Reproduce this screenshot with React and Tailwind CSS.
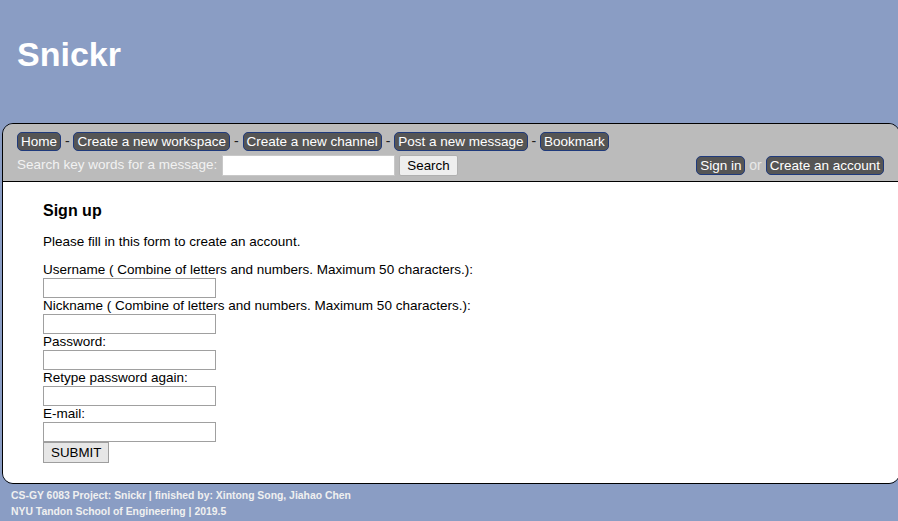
export default function App() {
  const navBtn =
    "inline-block h-[19px] px-[3px] rounded-[5px] border border-[#1f3a7c] bg-[#555555] text-white text-[13.5px] leading-[17px] whitespace-nowrap";
  const sep = <span className="text-[14px] text-[#222] whitespace-pre"> - </span>;
  const fields = [
    "Username ( Combine of letters and numbers. Maximum 50 characters.):",
    "Nickname ( Combine of letters and numbers. Maximum 50 characters.):",
    "Password:",
    "Retype password again:",
    "E-mail:",
  ];
  return (
    <div className="w-[898px] h-[521px] overflow-hidden bg-[#8a9dc4] font-['Liberation_Sans',Arial,sans-serif]">
      <header className="h-[123px] pt-[34px] px-[17px]">
        <h1 className="text-[34px] leading-[40px] font-bold text-white">Snickr</h1>
      </header>
      <div className="ml-[2px] w-[898px] border border-black rounded-t-[11px] rounded-b-[11px] overflow-hidden">
        <nav className="bg-[#bbbbbb] border-b border-black pt-[8px] pb-[5px] pl-[14px] pr-[15px] h-[58px]">
          <div className="flex items-center h-[19px]">
            <span className={navBtn}>Home</span>
            {sep}
            <span className={navBtn}>Create a new workspace</span>
            {sep}
            <span className={navBtn}>Create a new channel</span>
            {sep}
            <span className={navBtn}>Post a new message</span>
            {sep}
            <span className={navBtn}>Bookmark</span>
          </div>
          <div className="mt-[4px] h-[21px] flex items-center justify-between">
            <div className="flex items-center">
              <span className="text-[13.5px] text-[#f2f2f2] whitespace-nowrap">Search key words for a message:</span>
              <input className="ml-[5px] w-[173px] h-[21px] bg-white border border-[#c8c8c8] outline-none" />
              <button className="ml-[4px] h-[21px] px-[7px] bg-[#eeeeee] border border-[#b0b0b0] rounded-[2px] text-[13.33px] text-black leading-[17px]">
                Search
              </button>
            </div>
            <div className="flex items-center">
              <span className={navBtn}>Sign in</span>
              <span className="text-[14px] text-[#e8e8e8] whitespace-pre"> or </span>
              <span className={navBtn}>Create an account</span>
            </div>
          </div>
        </nav>
        <main className="bg-white h-[301px] pl-[40px] pt-[20px] text-black">
          <h2 className="text-[16px] leading-[18px] font-bold">Sign up</h2>
          <p className="mt-[14px] text-[13.5px] leading-[16px]">Please fill in this form to create an account.</p>
          <div className="mt-[12px]">
            {fields.map((f) => (
              <div key={f}>
                <div className="h-[16px] text-[13.5px] leading-[16px] whitespace-nowrap">{f}</div>
                <input className="block w-[173px] h-[20px] bg-white border border-[#a0a0a0] outline-none" />
              </div>
            ))}
            <button className="block h-[21px] px-[7px] bg-[#e6e6e6] border border-[#9e9e9e] text-[13.33px] leading-[17px] text-black">
              SUBMIT
            </button>
          </div>
        </main>
      </div>
      <footer className="pt-[4px] pl-[11px] text-[10.4px] leading-[16px] font-bold text-[#f0f0f0]">
        <div>CS-GY 6083 Project: Snickr | finished by: Xintong Song, Jiahao Chen</div>
        <div>NYU Tandon School of Engineering | 2019.5</div>
      </footer>
    </div>
  );
}
